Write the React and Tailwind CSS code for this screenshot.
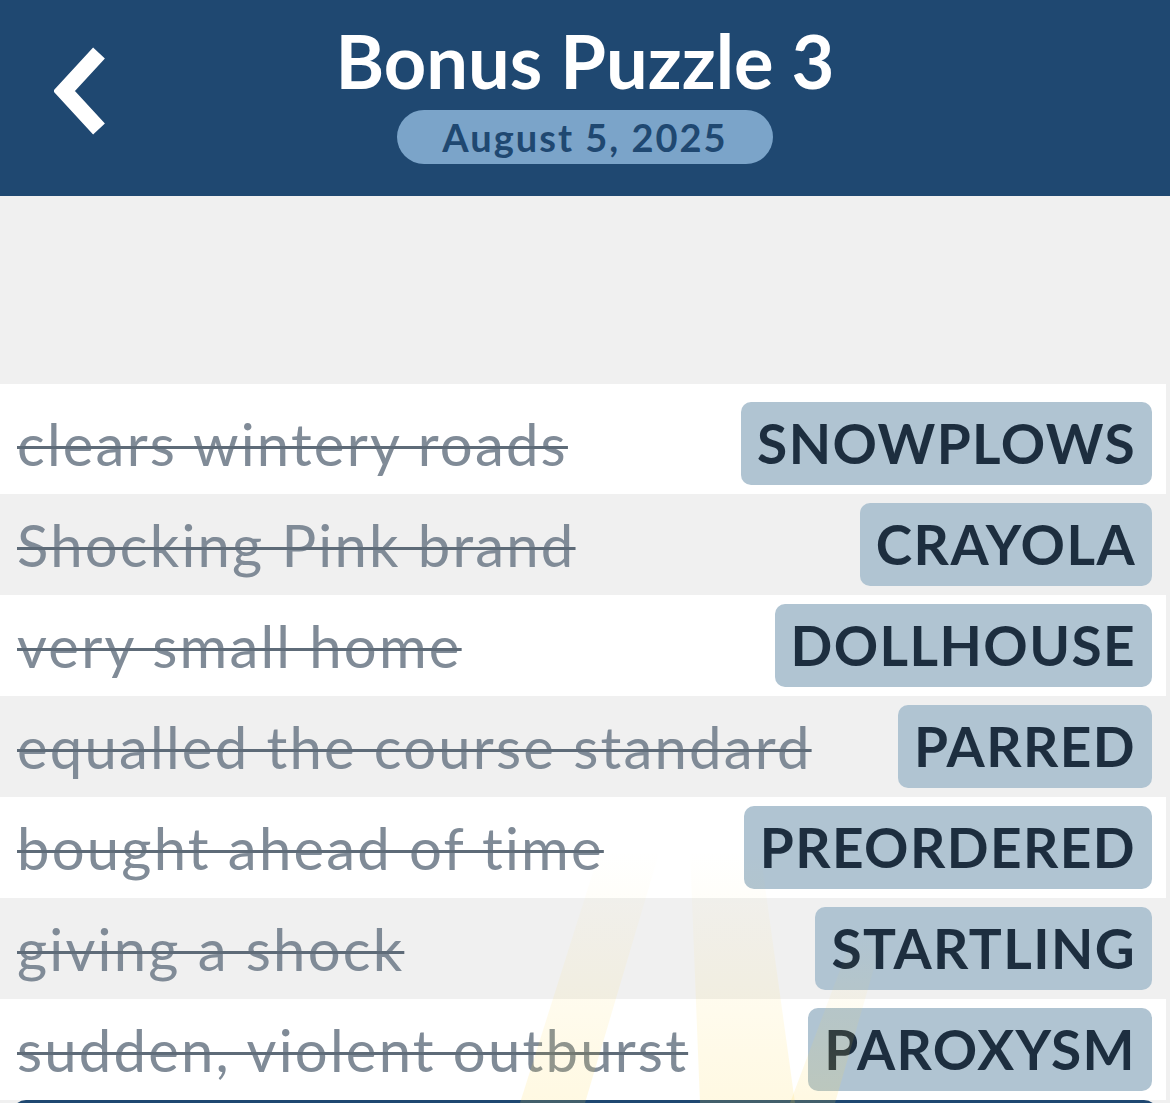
import React from 'react';

const rows = [
  { clue: 'clears wintery roads', answer: 'SNOWPLOWS' },
  { clue: 'Shocking Pink brand', answer: 'CRAYOLA' },
  { clue: 'very small home', answer: 'DOLLHOUSE' },
  { clue: 'equalled the course standard', answer: 'PARRED' },
  { clue: 'bought ahead of time', answer: 'PREORDERED' },
  { clue: 'giving a shock', answer: 'STARTLING' },
  { clue: 'sudden, violent outburst', answer: 'PAROXYSM' },
];

const BackChevron = () => (
  <svg width="60" height="90" viewBox="0 0 60 90" className="block">
    <polyline
      points="45,6 10,44 45,82"
      fill="none"
      stroke="white"
      strokeWidth="16"
      strokeLinejoin="miter"
    />
  </svg>
);

const App = () => {
  return (
    <div
      className="relative h-[1103px] w-full overflow-hidden bg-[#f0f0f0]"
      style={{ fontFamily: 'Lato, "Open Sans", sans-serif' }}
    >
      {/* Header */}
      <header className="grid h-[196px] grid-cols-[1fr_auto_1fr] bg-[#1f4871]">
        <div className="flex items-start pl-[54px] pt-[47px]">
          <BackChevron />
        </div>
        <div className="flex flex-col items-center pt-[24px]">
          <h1 className="text-[74px] font-bold leading-[74px] text-white">Bonus Puzzle 3</h1>
          <div className="mt-[12px] flex h-[54px] w-[376px] items-center justify-center rounded-full bg-[#7ba4c9]">
            <span className="text-[38px] font-bold leading-none tracking-[2px] text-[#1f4871]">August 5, 2025</span>
          </div>
        </div>
        <div />
      </header>

      {/* Empty space above list */}
      <div className="h-[188px]" />

      {/* Clue list */}
      <div className="mr-[4px] bg-white pt-[9px]">
        {rows.map((row, i) => (
          <div
            key={row.answer}
            className={`flex h-[101px] items-center justify-between pl-[17px] pr-[14px] ${
              i % 2 === 0 ? 'bg-white' : 'bg-[#f0f0f0]'
            }`}
          >
            <span className="whitespace-nowrap text-[58px] leading-none tracking-[2.2px] text-[#808b97] line-through decoration-[#5e6b78] decoration-[3px]">
              {row.clue}
            </span>
            <span className="flex h-[83px] items-center rounded-[10px] bg-[#b0c4d2] px-[16px] text-[55px] font-bold leading-none tracking-[1.4px] text-[#1d2e3f]">
              {row.answer}
            </span>
          </div>
        ))}
      </div>

      {/* bottom button peeking in */}
      <div className="mx-[12px] h-[40px] rounded-t-[14px] bg-[#1f4871]" />

      {/* faint light rays */}
      <svg
        className="pointer-events-none absolute left-0 top-0"
        width="1170"
        height="1103"
        viewBox="0 0 1170 1103"
      >
        <defs>
          <linearGradient id="ray" x1="0" y1="0" x2="0" y2="1">
            <stop offset="0" stopColor="#ffd84a" stopOpacity="0" />
            <stop offset="1" stopColor="#ffd84a" stopOpacity="0.16" />
          </linearGradient>
        </defs>
        <polygon points="600,850 660,850 585,1103 520,1103" fill="url(#ray)" />
        <polygon points="690,850 760,850 795,1103 700,1103" fill="url(#ray)" />
        <polygon points="855,930 885,930 835,1103 790,1103" fill="url(#ray)" />
      </svg>
    </div>
  );
};

export default App;
